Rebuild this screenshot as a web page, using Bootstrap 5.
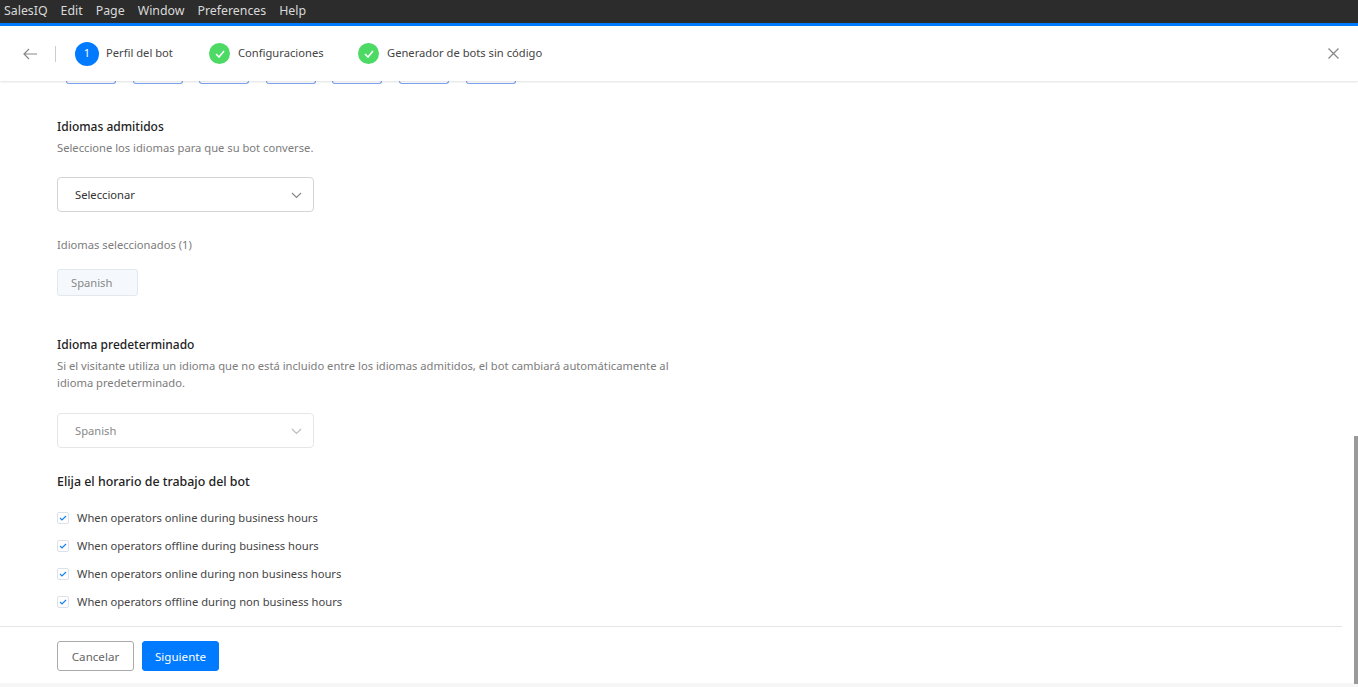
<!DOCTYPE html>
<html lang="es"><head><meta charset="utf-8"><title>SalesIQ</title>
<link href="https://cdn.jsdelivr.net/npm/bootstrap@5.3.0/dist/css/bootstrap.min.css" rel="stylesheet">
<style>
html,body{height:100%;overflow:hidden}
body{font-family:"Noto Sans",sans-serif;font-size:11.2px;color:#333;background:#fff}
.app{height:687px}
.menubar{height:23px;background:#2c2c2c;color:#d9d9d9;font-size:12.35px;padding-left:4px;gap:13px;line-height:21px}
.stripe{height:3px;background:#007bff}
.topbar{height:55px;background:#fff;box-shadow:0 1px 2px rgba(0,0,0,.12);z-index:2;padding-left:23px;padding-right:19px;color:#444}
.vsep{width:1px;height:16px;background:#ccc;margin:0 19px 0 18px}
.num{width:24px;height:24px;border-radius:50%;background:#007bff;color:#fff;font-size:11px;margin-right:7px}
.ok{width:21px;height:21px;border-radius:50%;background:#4cd964;margin-right:8px}
.step1{width:103px}.step2{width:120px}
.body-scroll{flex:1;min-height:0;padding-left:57px;overflow:hidden}
.tiles{height:3px;gap:16.6px;margin-left:9px}
.tile{width:50px;height:3px;border:1px solid #7aa3ee;border-top:0;border-radius:0 0 5px 5px}
.ttl{font-size:12px;font-weight:500;color:#222;line-height:18px}
.ttl.wide{font-size:12.4px}
.sub{color:#7c7c7c;line-height:17px}
.pick{width:257px;height:35px;border:1px solid #d4d4d4;border-radius:4px;padding:1px 11px 0 17px;color:#333}
.pick.off{border-color:#e6e6e6;color:#888}
.chip{width:81px;height:27px;background:#f5f8fc;border:1px solid #e3e8ef;border-radius:3px;color:#888;padding:1px 0 0 13px}
.chk{width:12px;height:12px;border:1px solid #dde2e9;border-radius:2px;margin-right:8px;margin-top:-1px}
.opt{height:28px;color:#444}
.thumb{position:absolute;right:0;top:436px;width:4px;height:248px;background:#9a9a9a}
.foot{height:57px;margin-right:16px;border-top:1px solid #e6e6e6;padding-left:57px;padding-top:2px;gap:8px}
.b-cancel,.b-next{height:30px;width:77px;font-size:11.6px;padding:1px 0 0;border-radius:3px}
.b-cancel{border:1px solid #aaa;color:#666;background:#fff}
.b-next{border:1px solid #007bff;background:#007bff;color:#fff}
.end{height:4px;background:#f6f6f6}
.gapa{margin-top:34px}.subgap{margin-top:3px}.subgap2{margin-top:3px}.gapb{margin-top:21px}.gapb2{margin-top:22px}.gapc{margin-top:24px}.gapd{margin-top:16px}.gape{margin-top:40px}.gapg{margin-top:25px}.gaph{margin-top:13px}
</style></head><body>
<div class="app d-flex flex-column position-relative">
<div class="menubar d-flex"><span>SalesIQ</span><span>Edit</span><span>Page</span><span>Window</span><span>Preferences</span><span>Help</span></div>
<div class="stripe"></div>
<div class="topbar d-flex align-items-center">
<svg width="14" height="12" viewBox="0 0 14 12" fill="none" stroke="#888" stroke-width="1.2"><path d="M14 6H1M6 1 1 6l5 5"/></svg>
<span class="vsep"></span>
<span class="num d-flex align-items-center justify-content-center">1</span><span class="step1">Perfil del bot</span>
<span class="ok d-flex align-items-center justify-content-center"><svg width="10" height="8" viewBox="0 0 10 8" fill="none" stroke="#fff" stroke-width="1.6"><path d="M1 4l3 3 5-6"/></svg></span><span class="step2">Configuraciones</span>
<span class="ok d-flex align-items-center justify-content-center"><svg width="10" height="8" viewBox="0 0 10 8" fill="none" stroke="#fff" stroke-width="1.6"><path d="M1 4l3 3 5-6"/></svg></span><span>Generador de bots sin código</span>
<svg class="ms-auto" width="11" height="11" viewBox="0 0 11 11" stroke="#888" stroke-width="1.3"><path d="M.5.5l10 10M10.500.5l-10 10"/></svg>
</div>
<div class="body-scroll">
<div class="tiles d-flex"><i class="tile"></i><i class="tile"></i><i class="tile"></i><i class="tile"></i><i class="tile"></i><i class="tile"></i><i class="tile"></i></div>
<div class="ttl gapa">Idiomas admitidos</div>
<div class="sub subgap">Seleccione los idiomas para que su bot converse.</div>
<div class="pick d-flex align-items-center justify-content-between gapb"><span>Seleccionar</span><svg width="11" height="7" viewBox="0 0 11 7" fill="none" stroke="#888" stroke-width="1.2"><path d="M1 1l4.500 4.500L10 1"/></svg></div>
<div class="sub gapc">Idiomas seleccionados (1)</div>
<div class="chip d-flex align-items-center gapd">Spanish</div>
<div class="ttl gape">Idioma predeterminado</div>
<div class="sub subgap2">Si el visitante utiliza un idioma que no está incluido entre los idiomas admitidos, el bot cambiará automáticamente al<br>idioma predeterminado.</div>
<div class="pick off d-flex align-items-center justify-content-between gapb2"><span>Spanish</span><svg width="11" height="7" viewBox="0 0 11 7" fill="none" stroke="#bbb" stroke-width="1.2"><path d="M1 1l4.500 4.500L10 1"/></svg></div>
<div class="ttl wide gapg">Elija el horario de trabajo del bot</div>
<div class="gaph">
<div class="opt d-flex align-items-center"><span class="chk d-flex align-items-center justify-content-center"><svg width="8" height="6" viewBox="0 0 8 6" fill="none" stroke="#1a82f0" stroke-width="1.2"><path d="M1 3l2 2 4-4"/></svg></span>When operators online during business hours</div>
<div class="opt d-flex align-items-center"><span class="chk d-flex align-items-center justify-content-center"><svg width="8" height="6" viewBox="0 0 8 6" fill="none" stroke="#1a82f0" stroke-width="1.2"><path d="M1 3l2 2 4-4"/></svg></span>When operators offline during business hours</div>
<div class="opt d-flex align-items-center"><span class="chk d-flex align-items-center justify-content-center"><svg width="8" height="6" viewBox="0 0 8 6" fill="none" stroke="#1a82f0" stroke-width="1.2"><path d="M1 3l2 2 4-4"/></svg></span>When operators online during non business hours</div>
<div class="opt d-flex align-items-center"><span class="chk d-flex align-items-center justify-content-center"><svg width="8" height="6" viewBox="0 0 8 6" fill="none" stroke="#1a82f0" stroke-width="1.2"><path d="M1 3l2 2 4-4"/></svg></span>When operators offline during non business hours</div>
</div>
</div>
<div class="foot d-flex align-items-center"><button class="btn b-cancel">Cancelar</button><button class="btn b-next">Siguiente</button></div>
<div class="end"></div>
<div class="thumb"></div>
</div>
</body></html>
